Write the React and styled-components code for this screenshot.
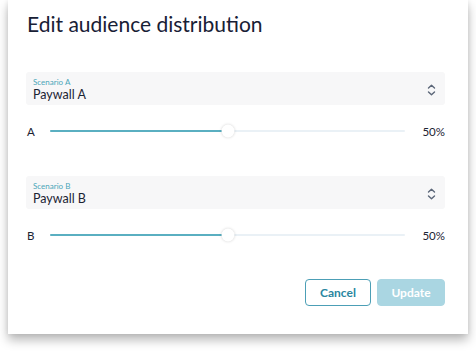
import React from "react";
import styled, { createGlobalStyle } from "styled-components";

const Global = createGlobalStyle`
  html, body { margin: 0; padding: 0; background: #ffffff; }
  body { font-family: Lato, "Noto Sans", sans-serif; color: #1b2333; }
`;

const Page = styled.div`
  padding: 0 8px 0 8px;
  height: 351px;
  box-sizing: border-box;
`;

const Dialog = styled.div`
  width: 460px;
  box-sizing: border-box;
  background: #fff;
  padding: 10px 23px 28px 18px;
  box-shadow: 0 6px 10px rgba(0, 0, 0, 0.28), 0 0 5px rgba(0, 0, 0, 0.08);
  display: flex;
  flex-direction: column;
`;

const Title = styled.h1`
  margin: 0 0 0 1px;
  font-size: 21px;
  line-height: 27px;
  font-weight: 400;
  color: #182035;
`;

const Section = styled.div`
  margin-top: ${(p) => p.$top}px;
  display: flex;
  flex-direction: column;
`;

const Select = styled.div`
  height: 33px;
  box-sizing: border-box;
  background: #f7f7f8;
  border-radius: 3px;
  padding: 3px 9px 0 7px;
  display: flex;
  align-items: center;
`;

const SelectText = styled.div`
  flex: 1;
  display: flex;
  flex-direction: column;
`;

const SelectLabel = styled.div`
  font-size: 8px;
  line-height: 10px;
  color: #4ba6b9;
`;

const SelectValue = styled.div`
  font-size: 12.5px;
  line-height: 16px;
  color: #1b2333;
`;

const SliderRow = styled.div`
  margin-top: 16px;
  height: 20px;
  display: grid;
  grid-template-columns: 24px 1fr auto;
  align-items: center;
`;

const SliderLabel = styled.span`
  font-size: 11.5px;
  color: #1b2333;
  padding-left: 1px;
`;

const Track = styled.div`
  position: relative;
  height: 2px;
  background: #eaf1f6;
  border-radius: 1px;
`;

const Fill = styled.div`
  height: 100%;
  background: #5aafc1;
  border-radius: 1px;
`;

const Thumb = styled.div`
  position: absolute;
  top: 50%;
  width: 13px;
  height: 13px;
  border-radius: 50%;
  background: #fff;
  transform: translate(-50%, -50%);
  box-shadow: 0 0 3px rgba(0, 0, 0, 0.18);
`;

const Percent = styled.span`
  font-size: 11.5px;
  color: #1b2333;
  padding-left: 17px;
`;

const Actions = styled.div`
  margin-top: 34px;
  display: flex;
  justify-content: flex-end;
  gap: 6px;
`;

const Button = styled.button`
  height: 27px;
  box-sizing: border-box;
  border-radius: 4px;
  font-family: Lato, "Noto Sans", sans-serif;
  font-size: 12px;
  font-weight: 700;
  padding: 0;
  width: ${(p) => p.$w}px;
  border: 1px solid ${(p) => (p.$primary ? "#aad6e2" : "#4c9fb6")};
  background: ${(p) => (p.$primary ? "#aad6e2" : "#fff")};
  color: ${(p) => (p.$primary ? "#ffffff" : "#2a86a0")};
`;

const Chevrons = () => (
  <svg width="9" height="12" viewBox="0 0 9 12" fill="none">
    <path d="M1.5 4 L4.5 1.2 L7.5 4" stroke="#5b6678" strokeWidth="1.4" strokeLinecap="round" strokeLinejoin="round" />
    <path d="M1.5 8 L4.5 10.8 L7.5 8" stroke="#5b6678" strokeWidth="1.4" strokeLinecap="round" strokeLinejoin="round" />
  </svg>
);

const Slider = ({ label, value }) => (
  <SliderRow>
    <SliderLabel>{label}</SliderLabel>
    <Track>
      <Fill style={{ width: `${value}%` }} />
      <Thumb style={{ left: `${value}%` }} />
    </Track>
    <Percent>{value}%</Percent>
  </SliderRow>
);

const Scenario = ({ top, name, value, letter, pct }) => (
  <Section $top={top}>
    <Select>
      <SelectText>
        <SelectLabel>{name}</SelectLabel>
        <SelectValue>{value}</SelectValue>
      </SelectText>
      <Chevrons />
    </Select>
    <Slider label={letter} value={pct} />
  </Section>
);

export default function App() {
  return (
    <>
      <Global />
      <Page>
        <Dialog>
          <Title>Edit audience distribution</Title>
          <Scenario top={35} name="Scenario A" value="Paywall A" letter="A" pct={50} />
          <Scenario top={35} name="Scenario B" value="Paywall B" letter="B" pct={50} />
          <Actions>
            <Button $w={66}>Cancel</Button>
            <Button $w={68} $primary>Update</Button>
          </Actions>
        </Dialog>
      </Page>
    </>
  );
}
